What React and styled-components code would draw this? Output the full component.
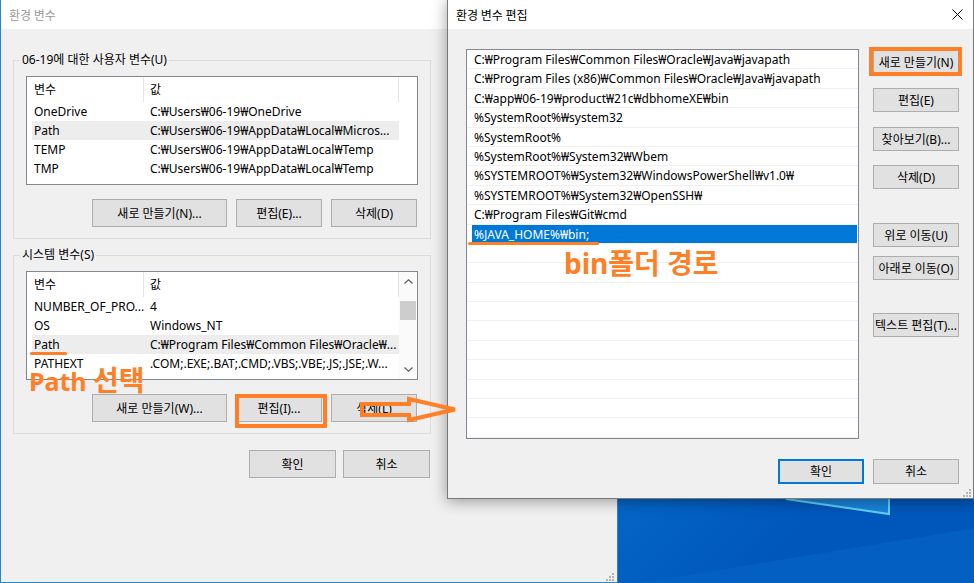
import React from "react";
import styled, { createGlobalStyle } from "styled-components";

const ORANGE = "#ff7f27";
const FONT = `"Noto Sans", "Noto Sans CJK KR", sans-serif`;
const KFONT = `"Noto Sans CJK KR", sans-serif`;

const GlobalStyle = createGlobalStyle`
  html, body { margin: 0; padding: 0; background: #0a78d8; }
  body { font-family: ${FONT}; font-size: 12px; color: #000; }
  * { box-sizing: border-box; }
`;

const userVars = [
  ["OneDrive", "C:₩Users₩06-19₩OneDrive"],
  ["Path", "C:₩Users₩06-19₩AppData₩Local₩Micros...", true],
  ["TEMP", "C:₩Users₩06-19₩AppData₩Local₩Temp"],
  ["TMP", "C:₩Users₩06-19₩AppData₩Local₩Temp"],
];

const sysVars = [
  ["NUMBER_OF_PRO...", "4"],
  ["OS", "Windows_NT"],
  ["Path", "C:₩Program Files₩Common Files₩Oracle₩...", true],
  ["PATHEXT", ".COM;.EXE;.BAT;.CMD;.VBS;.VBE;.JS;.JSE;.W..."],
];

const paths = [
  "C:₩Program Files₩Common Files₩Oracle₩Java₩javapath",
  "C:₩Program Files (x86)₩Common Files₩Oracle₩Java₩javapath",
  "C:₩app₩06-19₩product₩21c₩dbhomeXE₩bin",
  "%SystemRoot%₩system32",
  "%SystemRoot%",
  "%SystemRoot%₩System32₩Wbem",
  "%SYSTEMROOT%₩System32₩WindowsPowerShell₩v1.0₩",
  "%SYSTEMROOT%₩System32₩OpenSSH₩",
  "C:₩Program Files₩Git₩cmd",
  "%JAVA_HOME%₩bin;",
  "", "", "", "", "", "", "", "", "", "",
];

const sideButtons = [
  { label: "새로 만들기(N)", gap: 1 },
  { label: "편집(E)", gap: 14 },
  { label: "찾아보기(B)...", gap: 15 },
  { label: "삭제(D)", gap: 14 },
  { label: "위로 이동(U)", gap: 34 },
  { label: "아래로 이동(O)", gap: 9 },
  { label: "텍스트 편집(T)...", gap: 33 },
];

/* desktop + windows */

const Desktop = styled.div`
  position: relative;
  width: 974px;
  height: 583px;
  overflow: hidden;
`;

const Wallpaper = styled.svg`
  position: absolute;
  inset: 0;
`;

const Window = styled.div`
  position: absolute;
  left: ${(p) => p.$left}px;
  top: ${(p) => p.$top}px;
  width: ${(p) => p.$width}px;
  height: ${(p) => p.$height}px;
  border: 1px solid ${(p) => p.$border};
  background: #f0f0f0;
  display: flex;
  flex-direction: column;
  box-shadow: ${(p) => (p.$shadow ? "0 2px 14px rgba(0,0,0,0.38)" : "none")};
`;

const TitleBar = styled.div`
  height: 29px;
  flex: none;
  background: #fff;
  display: flex;
  align-items: center;
  justify-content: space-between;
  padding: 0 10px 1px 8px;
  font-family: ${KFONT};
  font-size: 12px;
  color: ${(p) => (p.$active ? "#000" : "#9a9a9a")};
`;

const CloseIcon = styled.svg`
  width: 11px;
  height: 11px;
  margin-top: 1px;
`;

const GripIcon = styled.svg`
  position: absolute;
  right: ${(p) => p.$r}px;
  bottom: ${(p) => p.$b}px;
`;

const Grip = ({ r, b }) => (
  <GripIcon $r={r} $b={b} width="8" height="8" viewBox="0 0 8 8">
    {[[6, 0], [3, 3], [6, 3], [0, 6], [3, 6], [6, 6]].map(([x, y]) => (
      <rect key={`${x}-${y}`} x={x} y={y} width="2" height="2" fill="#b4b4b4" />
    ))}
  </GripIcon>
);

/* left dialog */

const LeftBody = styled.div`
  padding: 0 12px;
  display: flex;
  flex-direction: column;
`;

const GroupBox = styled.div`
  width: 418px;
  margin-top: ${(p) => p.$mt}px;
  border: 1px solid #dcdcdc;
  padding: 0 12px 11px;
`;

const GroupLabel = styled.div`
  width: fit-content;
  margin: -9px 0 0 -6px;
  padding: 0 2px;
  background: #f0f0f0;
  line-height: 16px;
`;

const ListView = styled.div`
  margin-top: 8px;
  height: 109px;
  border: 1px solid #828790;
  background: #fff;
  display: flex;
  overflow: hidden;
`;

const ListMain = styled.div`
  flex: 1;
  min-width: 0;
`;

const Header = styled.div`
  display: flex;
  width: 372px;
  height: 25px;
  line-height: 25px;
`;

const HeaderCell = styled.div`
  width: ${(p) => p.$w}px;
  padding-left: ${(p) => p.$pl}px;
  border-right: 1px solid #e5e5e5;
`;

const Row = styled.div`
  display: grid;
  grid-template-columns: 112px 1fr;
  width: 367px;
  margin-left: 5px;
  height: 19px;
  line-height: 19px;
  background: ${(p) => (p.$selected ? "#ededed" : "transparent")};
  white-space: nowrap;
`;

const Cell = styled.div`
  padding-left: ${(p) => p.$pl}px;
  overflow: hidden;
`;

const Scrollbar = styled.div`
  width: 18px;
  flex: none;
  background: #fafafa;
  display: flex;
  flex-direction: column;
  align-items: center;
`;

const ScrollArrow = styled.svg`
  flex: none;
  margin: ${(p) => p.$m};
`;

const Track = styled.div`
  flex: 1;
  width: 100%;
  padding: 0 1px;
`;

const Thumb = styled.div`
  margin-top: ${(p) => p.$top}px;
  height: 19px;
  background: #cdcdcd;
`;

const ButtonRow = styled.div`
  display: flex;
  justify-content: flex-end;
  gap: ${(p) => p.$gap}px;
  margin-top: ${(p) => p.$mt}px;
  padding-right: ${(p) => p.$pr}px;
  width: ${(p) => (p.$w ? `${p.$w}px` : "auto")};
`;

const Button = styled.div`
  width: ${(p) => p.$w}px;
  height: ${(p) => p.$h}px;
  margin-top: ${(p) => p.$mt || 0}px;
  flex: none;
  background: #e1e1e1;
  border: ${(p) => (p.$default ? "2px solid #0078d7" : "1px solid #adadad")};
  display: flex;
  align-items: center;
  justify-content: center;
  white-space: nowrap;
  font-size: 12px;
  padding-bottom: 1px;
`;

const VarList = ({ rows, scroll }) => (
  <ListView>
    <ListMain>
      <Header>
        <HeaderCell $w={117} $pl={7}>변수</HeaderCell>
        <HeaderCell $w={255} $pl={6}>값</HeaderCell>
      </Header>
      {rows.map(([name, value, sel]) => (
        <Row key={name} $selected={sel}>
          <Cell $pl={2}>{name}</Cell>
          <Cell $pl={6}>{value}</Cell>
        </Row>
      ))}
    </ListMain>
    {scroll && (
      <Scrollbar>
        <ScrollArrow $m="7px 0 0" width="9" height="5" viewBox="0 0 9 5">
          <path d="M0.5 4.5 L4.5 0.8 L8.5 4.5" fill="none" stroke="#606060" strokeWidth="1.2" />
        </ScrollArrow>
        <Track>
          <Thumb $top={17} />
        </Track>
        <ScrollArrow $m="0 0 7px" width="9" height="5" viewBox="0 0 9 5">
          <path d="M0.5 0.5 L4.5 4.2 L8.5 0.5" fill="none" stroke="#606060" strokeWidth="1.2" />
        </ScrollArrow>
      </Scrollbar>
    )}
  </ListView>
);

/* right dialog */

const RightBody = styled.div`
  padding: 20px 14px 0 18px;
  display: flex;
  flex-direction: column;
`;

const EditArea = styled.div`
  display: flex;
  gap: 14px;
`;

const PathList = styled.div`
  width: 393px;
  height: 390px;
  border: 1px solid #828790;
  background: #fff;
  overflow: hidden;
`;

const PathRow = styled.div`
  height: 19.4px;
  border-bottom: 1px solid #f0f0f0;
  display: flex;
`;

const PathItem = styled.div`
  flex: 1;
  height: 18.4px;
  margin: 0 1px 0 5px;
  padding: 2px 0 0 2px;
  line-height: 16px;
  white-space: nowrap;
  background: ${(p) => (p.$selected ? "#0078d7" : "transparent")};
  color: ${(p) => (p.$selected ? "#fff" : "#000")};
`;

const SideColumn = styled.div`
  display: flex;
  flex-direction: column;
`;

/* annotations drawn over the screenshot */

const Frame = styled.div`
  position: absolute;
  left: ${(p) => p.$x}px;
  top: ${(p) => p.$y}px;
  width: ${(p) => p.$w}px;
  height: ${(p) => p.$h}px;
  border: 4px solid ${ORANGE};
`;

const Underline = styled.div`
  position: absolute;
  left: ${(p) => p.$x}px;
  top: ${(p) => p.$y}px;
  width: ${(p) => p.$w}px;
  height: 3px;
  border-radius: 2px;
  background: ${ORANGE};
`;

const Note = styled.div`
  position: absolute;
  left: ${(p) => p.$x}px;
  top: ${(p) => p.$y}px;
  font-family: "Noto Sans", "Noto Sans CJK KR", sans-serif;
  font-weight: 700;
  font-size: ${(p) => p.$size}px;
  line-height: 1;
  color: ${ORANGE};
  white-space: nowrap;
`;

const NoteKo = styled.span`
  font-size: ${(p) => p.$size}px;
`;

const ArrowMark = styled.svg`
  position: absolute;
  left: 355px;
  top: 392px;
`;

export default function App() {
  return (
    <Desktop>
      <GlobalStyle />
      <Wallpaper width="974" height="583" viewBox="0 0 974 583">
        <defs>
          <linearGradient id="wp" x1="0" y1="0" x2="1" y2="0.6">
            <stop offset="0" stopColor="#1b92ea" />
            <stop offset="0.62" stopColor="#0a7ad8" />
            <stop offset="1" stopColor="#0057bb" />
          </linearGradient>
        </defs>
        <rect width="974" height="583" fill="url(#wp)" />
        <polygon points="640,583 974,528 974,583" fill="#0566c8" opacity="0.55" />
        <polygon points="780,498 889,514 889,498" fill="#2aa0ec" opacity="0.6" />
        <polyline points="786,499 889,514 889,498" fill="none" stroke="#5fd0f5" strokeWidth="2" />
      </Wallpaper>

      <Window $left={0} $top={-1} $width={618} $height={584} $border="#2a86c4">
        <TitleBar>환경 변수</TitleBar>
        <LeftBody>
          <GroupBox $mt={31}>
            <GroupLabel>06-19에 대한 사용자 변수(U)</GroupLabel>
            <VarList rows={userVars} />
            <ButtonRow $gap={9} $mt={14} $pr={1}>
              <Button $w={135} $h={28}>새로 만들기(N)...</Button>
              <Button $w={86} $h={28}>편집(E)...</Button>
              <Button $w={86} $h={28}>삭제(D)</Button>
            </ButtonRow>
          </GroupBox>
          <GroupBox $mt={16}>
            <GroupLabel>시스템 변수(S)</GroupLabel>
            <VarList rows={sysVars} scroll />
            <ButtonRow $gap={9} $mt={14} $pr={1}>
              <Button $w={135} $h={28}>새로 만들기(W)...</Button>
              <Button $w={86} $h={28}>편집(I)...</Button>
              <Button $w={86} $h={28}>삭제(L)</Button>
            </ButtonRow>
          </GroupBox>
          <ButtonRow $gap={7} $mt={16} $pr={1} $w={418}>
            <Button $w={87} $h={28}>확인</Button>
            <Button $w={87} $h={28}>취소</Button>
          </ButtonRow>
        </LeftBody>
        <Grip r={3} b={1} />
      </Window>

      <Window $left={447} $top={-1} $width={527} $height={500} $border="#7a7a7a" $shadow>
        <TitleBar $active>
          환경 변수 편집
          <CloseIcon viewBox="0 0 11 11">
            <path d="M0.5 0.5 L10.5 10.5 M10.5 0.5 L0.5 10.5" stroke="#000" strokeWidth="1" />
          </CloseIcon>
        </TitleBar>
        <RightBody>
          <EditArea>
            <PathList>
              {paths.map((p, i) => (
                <PathRow key={i}>
                  <PathItem $selected={i === 9}>{p}</PathItem>
                </PathRow>
              ))}
            </PathList>
            <SideColumn>
              {sideButtons.map((b) => (
                <Button key={b.label} $w={86} $h={24} $mt={b.gap}>
                  {b.label}
                </Button>
              ))}
            </SideColumn>
          </EditArea>
          <ButtonRow $gap={9} $mt={20} $pr={0}>
            <Button $w={86} $h={25} $default>확인</Button>
            <Button $w={86} $h={25}>취소</Button>
          </ButtonRow>
        </RightBody>
        <Grip r={2} b={1} />
      </Window>

      <Frame $x={235} $y={394} $w={92} $h={34} />
      <Frame $x={869} $y={47} $w={93} $h={29} />
      <Underline $x={30} $y={352} $w={37} />
      <Underline $x={468} $y={242} $w={131} />
      <Note $x={29} $y={366} $size={25}>
        Path <NoteKo $size={28}>선택</NoteKo>
      </Note>
      <Note $x={564} $y={249} $size={28}>bin폴더 경로</Note>
      <ArrowMark width="110" height="36" viewBox="355 392 110 36">
        <polygon
          points="362,404 409,404 409,399 455,409.5 409,420 409,415 362,415"
          fill="none"
          stroke={ORANGE}
          strokeWidth="4"
          strokeLinejoin="miter"
        />
      </ArrowMark>
    </Desktop>
  );
}
